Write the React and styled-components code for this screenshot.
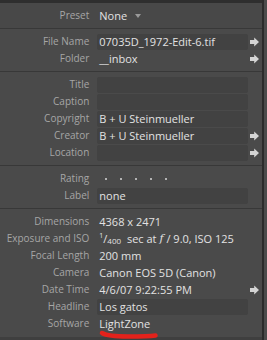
import React from "react";
import styled, { createGlobalStyle } from "styled-components";

const Global = createGlobalStyle`
  html, body { margin: 0; padding: 0; background: #4a4a4a; }
  body { width: 267px; height: 340px; overflow: hidden; font-family: "Open Sans", "DejaVu Sans", sans-serif; }
`;

const Page = styled.div`
  position: relative;
  width: 267px;
  height: 340px;
  display: flex;
  background: #4b4b4b;
`;

const Panel = styled.div`
  width: 262px;
  display: flex;
  flex-direction: column;
  border-right: 2px solid #2b2b2b;
  background: #4a4a4a;
`;

const TopBand = styled.div`
  height: 3px;
  background: #2e2e2e;
`;

const Section = styled.div`
  padding: 4px 0;
  background: ${(p) => p.$bg || "#4a4a4a"};
`;

const Separator = styled.div`
  height: 1px;
  background: #383838;
`;

const Filler = styled.div`
  flex: 1;
`;

const BottomBand = styled.div`
  height: 3px;
  background: #3f3f3f;
`;

const Row = styled.div`
  display: flex;
  align-items: center;
  height: 17px;
`;

const Label = styled.div`
  width: 90px;
  margin-right: 8px;
  text-align: right;
  font-size: 10px;
  color: #a6a6a6;
  white-space: nowrap;
  line-height: 17px;
`;

const Value = styled.div`
  width: 152px;
  height: 16px;
  box-sizing: border-box;
  padding-left: 2px;
  font-size: 11px;
  line-height: 16px;
  color: #e2e2e2;
  white-space: nowrap;
  border-radius: 2px;
  background: ${(p) => (p.$boxed ? "#424242" : "transparent")};
  display: flex;
  align-items: center;
`;

const ArrowCell = styled.div`
  width: 12px;
  padding-left: 2px;
  display: flex;
  align-items: center;
`;

const Caret = styled.span`
  display: inline-block;
  margin-left: 8px;
  width: 0;
  height: 0;
  border-left: 3px solid transparent;
  border-right: 3px solid transparent;
  border-top: 4px solid #9a9a9a;
`;

const Dots = styled.div`
  display: flex;
  gap: 13px;
  padding-left: 6px;
`;

const Dot = styled.span`
  width: 2px;
  height: 2px;
  border-radius: 1px;
  background: #d8d8d8;
`;

const Sup = styled.span`
  font-size: 7px;
  position: relative;
  top: -3px;
`;

const Sub = styled.span`
  font-size: 8px;
  position: relative;
  top: 2px;
  margin-right: 3px;
`;

const Italic = styled.span`
  font-style: italic;
  font-family: "DejaVu Serif", serif;
  margin-right: 3px;
`;

const Underline = styled.svg`
  position: absolute;
  left: 0;
  top: 0;
  pointer-events: none;
`;

const Arrow = () => (
  <svg width="9" height="10" viewBox="0 0 9 10">
    <path d="M0 3 H4.2 V0.5 L9 5 L4.2 9.5 V7 H0 Z" fill="#d4d4d4" />
  </svg>
);

const Field = ({ label, children, boxed, arrow }) => (
  <Row>
    <Label>{label}</Label>
    <Value $boxed={boxed}>{children}</Value>
    <ArrowCell>{arrow && <Arrow />}</ArrowCell>
  </Row>
);

export default function App() {
  return (
    <>
      <Global />
      <Page>
        <Panel>
          <TopBand />
          <Section $bg="#484848">
            <Field label="Preset">
              None<Caret />
            </Field>
          </Section>
          <Separator />
          <Section>
            <Field label="File Name" boxed arrow>07035D_1972-Edit-6.tif</Field>
            <Field label="Folder" arrow>__inbox</Field>
          </Section>
          <Separator />
          <Section>
            <Field label="Title" boxed />
            <Field label="Caption" boxed />
            <Field label="Copyright" boxed>B + U Steinmueller</Field>
            <Field label="Creator" boxed arrow>B + U Steinmueller</Field>
            <Field label="Location" boxed arrow />
          </Section>
          <Separator />
          <Section>
            <Field label="Rating">
              <Dots>
                <Dot /><Dot /><Dot /><Dot /><Dot />
              </Dots>
            </Field>
            <Field label="Label" boxed>none</Field>
          </Section>
          <Separator />
          <Section>
            <Field label="Dimensions">4368 x 2471</Field>
            <Field label="Exposure and ISO">
              <Sup>1</Sup>/<Sub>400</Sub>&nbsp;sec at&nbsp;<Italic>f</Italic>/ 9.0, ISO 125
            </Field>
            <Field label="Focal Length">200 mm</Field>
            <Field label="Camera">Canon EOS 5D (Canon)</Field>
            <Field label="Date Time" arrow>4/6/07 9:22:55 PM</Field>
            <Field label="Headline" boxed>Los gatos</Field>
            <Field label="Software">LightZone</Field>
          </Section>
          <Filler />
          <BottomBand />
        </Panel>
        <Underline width="267" height="340" viewBox="0 0 267 340">
          <path
            d="M102 333 Q108 336.5 128 336.5 T155.5 335.5"
            stroke="#e3221b"
            strokeWidth="4.5"
            strokeLinecap="round"
            fill="none"
          />
        </Underline>
      </Page>
    </>
  );
}
